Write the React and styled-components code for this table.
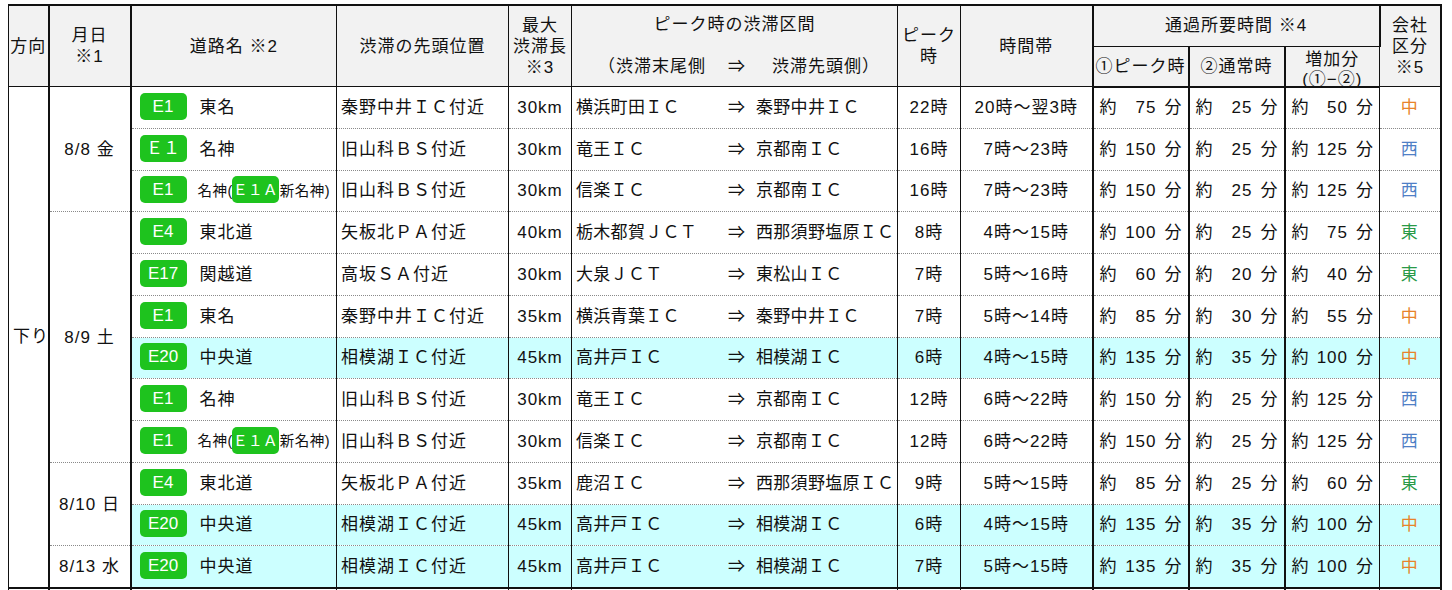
import React from 'react'
import styled, { createGlobalStyle } from 'styled-components'

const GlobalStyle = createGlobalStyle`
  body {
    margin: 0;
    padding: 4px 0 0 8px;
    background: #fff;
    color: #111;
    font-family: "Liberation Sans", "Noto Sans CJK JP", sans-serif;
  }
`

const WIDTHS = [40, 82, 206, 172, 63, 326, 63, 132, 96, 96, 95, 61]
// columns with a heavy rule on their right side
const THICK = [true, true, false, false, false, false, false, true, true, true, false, true]

const COMPANY = {
  中: '#e8832a',
  西: '#4f7fc6',
  東: '#2a9a48',
}

const ROWS = [
  { date: '8/8 金', span: 3, code: 'E1', name: '東名', head: '秦野中井ＩＣ付近', len: '30km', from: '横浜町田ＩＣ', to: '秦野中井ＩＣ', peak: '22時', band: '20時～翌3時', t: [75, 25, 50], co: '中' },
  { code: 'Ｅ１', name: '名神', head: '旧山科ＢＳ付近', len: '30km', from: '竜王ＩＣ', to: '京都南ＩＣ', peak: '16時', band: '7時～23時', t: [150, 25, 125], co: '西' },
  { code: 'E1', alt: true, head: '旧山科ＢＳ付近', len: '30km', from: '信楽ＩＣ', to: '京都南ＩＣ', peak: '16時', band: '7時～23時', t: [150, 25, 125], co: '西' },
  { date: '8/9 土', span: 6, code: 'E4', name: '東北道', head: '矢板北ＰＡ付近', len: '40km', from: '栃木都賀ＪＣＴ', to: '西那須野塩原ＩＣ', peak: '8時', band: '4時～15時', t: [100, 25, 75], co: '東' },
  { code: 'E17', name: '関越道', head: '高坂ＳＡ付近', len: '30km', from: '大泉ＪＣＴ', to: '東松山ＩＣ', peak: '7時', band: '5時～16時', t: [60, 20, 40], co: '東' },
  { code: 'E1', name: '東名', head: '秦野中井ＩＣ付近', len: '35km', from: '横浜青葉ＩＣ', to: '秦野中井ＩＣ', peak: '7時', band: '5時～14時', t: [85, 30, 55], co: '中' },
  { code: 'E20', name: '中央道', head: '相模湖ＩＣ付近', len: '45km', from: '高井戸ＩＣ', to: '相模湖ＩＣ', peak: '6時', band: '4時～15時', t: [135, 35, 100], co: '中', hl: true },
  { code: 'E1', name: '名神', head: '旧山科ＢＳ付近', len: '30km', from: '竜王ＩＣ', to: '京都南ＩＣ', peak: '12時', band: '6時～22時', t: [150, 25, 125], co: '西' },
  { code: 'E1', alt: true, head: '旧山科ＢＳ付近', len: '30km', from: '信楽ＩＣ', to: '京都南ＩＣ', peak: '12時', band: '6時～22時', t: [150, 25, 125], co: '西' },
  { date: '8/10 日', span: 2, code: 'E4', name: '東北道', head: '矢板北ＰＡ付近', len: '35km', from: '鹿沼ＩＣ', to: '西那須野塩原ＩＣ', peak: '9時', band: '5時～15時', t: [85, 25, 60], co: '東' },
  { code: 'E20', name: '中央道', head: '相模湖ＩＣ付近', len: '45km', from: '高井戸ＩＣ', to: '相模湖ＩＣ', peak: '6時', band: '4時～15時', t: [135, 35, 100], co: '中', hl: true },
  { date: '8/13 水', span: 1, code: 'E20', name: '中央道', head: '相模湖ＩＣ付近', len: '45km', from: '高井戸ＩＣ', to: '相模湖ＩＣ', peak: '7時', band: '5時～15時', t: [135, 35, 100], co: '中', hl: true },
]

// header text, one block per line so mixed fonts can't grow the rows
const Lines = ({ items }) => items.map((t, i) => <Line key={i}>{t}</Line>)

function App() {
  return (
    <>
      <GlobalStyle />
      <Table>
        <colgroup>
          {WIDTHS.map((w, i) => (
            <col key={i} style={{ width: w }} />
          ))}
        </colgroup>
        <thead>
          <HeadRow $h={41}>
            <Th rowSpan={2} $thick>
              <Lines items={['方向']} />
            </Th>
            <Th rowSpan={2} $thick>
              <Lines items={['月日', '※1']} />
            </Th>
            <Th rowSpan={2}>
              <Lines items={['道路名 ※2']} />
            </Th>
            <Th rowSpan={2}>
              <Lines items={['渋滞の先頭位置']} />
            </Th>
            <Th rowSpan={2}>
              <Lines items={['最大', '渋滞長', '※3']} />
            </Th>
            <Th rowSpan={2}>
              <SectionTitle>ピーク時の渋滞区間</SectionTitle>
              <SectionLegend>
                <span>（渋滞末尾側</span>
                <span>⇒</span>
                <span>渋滞先頭側）</span>
              </SectionLegend>
            </Th>
            <Th rowSpan={2}>
              <Lines items={['ピーク', '時']} />
            </Th>
            <Th rowSpan={2} $thick>
              <Lines items={['時間帯']} />
            </Th>
            <Th colSpan={3} $thick>
              <Lines items={['通過所要時間 ※4']} />
            </Th>
            <Th rowSpan={2} $thick>
              <Lines items={['会社', '区分', '※5']} />
            </Th>
          </HeadRow>
          <HeadRow $h={40}>
            <Th $thick>
              <Lines items={['①ピーク時']} />
            </Th>
            <Th $thick>
              <Lines items={['②通常時']} />
            </Th>
            <Th>
              <Overhang>
                <Lines items={['増加分', '(①−②)']} />
              </Overhang>
            </Th>
          </HeadRow>
        </thead>
        <tbody>
          {ROWS.map((r, i) => (
            <Row key={i} $hl={r.hl}>
              {i === 0 && (
                <Td rowSpan={ROWS.length} $thick $align="center" $plain>
                  下り
                </Td>
              )}
              {r.date && (
                <Td rowSpan={r.span} $thick $align="center" $plain>
                  {r.date}
                </Td>
              )}
              <Td $pad="0 0 0 8px">
                <Road>
                  <Badge>{r.code}</Badge>
                  {r.alt ? (
                    <AltName>
                      名神(<Badge $inline>Ｅ１Ａ</Badge>新名神)
                    </AltName>
                  ) : (
                    <RoadName>{r.name}</RoadName>
                  )}
                </Road>
              </Td>
              <Td>{r.head}</Td>
              <Td $align="center">{r.len}</Td>
              <Td>
                <Section>
                  <span>{r.from}</span>
                  <span>⇒</span>
                  <span>{r.to}</span>
                </Section>
              </Td>
              <Td $align="center">{r.peak}</Td>
              <Td $align="center" $thick>
                {r.band}
              </Td>
              {r.t.map((n, k) => (
                <Td key={k} $thick={k < 2} $pad="0 5px 0 6px">
                  <Dur>
                    <span>約</span>
                    <span>
                      {n}
                      <Unit>分</Unit>
                    </span>
                  </Dur>
                </Td>
              ))}
              <Td $align="center" $thick $color={COMPANY[r.co]}>
                {r.co}
              </Td>
            </Row>
          ))}
          <Row>
            {WIDTHS.map((w, i) => (
              <Td key={i} $thick={THICK[i]} $top />
            ))}
          </Row>
        </tbody>
      </Table>
    </>
  )
}

const Table = styled.table`
  width: 1432px;
  table-layout: fixed;
  border-collapse: collapse;
  font-size: 17px;
  letter-spacing: 1px;
  border-top: 2px solid #111;
  border-left: 1px solid #111;
`

const HeadRow = styled.tr`
  height: ${p => p.$h}px;
`

const Th = styled.th`
  background: #f2f2f2;
  font-weight: normal;
  text-align: center;
  vertical-align: middle;
  padding: 0;
  border: 1px solid #111;
  border-right: ${p => (p.$thick ? 2 : 1)}px solid #111;
  white-space: nowrap;

  tr:last-child > & {
    border-bottom: 2px solid #111;
  }
`

const Line = styled.div`
  height: 21px;
  line-height: 21px;
`

const Overhang = styled.div`
  height: 36px;
  padding-top: 3px;

  & > div {
    height: 20px;
    line-height: 20px;
  }
`

const SectionTitle = styled.div`
  height: 22px;
  line-height: 22px;
  margin-bottom: 20px;
`

const SectionLegend = styled.div`
  display: flex;
  height: 22px;
  line-height: 22px;
  padding-left: 26px;

  span:nth-child(2) {
    margin: 0 26px 0 22px;
  }
`

const Row = styled.tr`
  height: 41.75px;
  background: ${p => (p.$hl ? '#ccffff' : '#fff')};
`

const Td = styled.td`
  padding: ${p => p.$pad || '0 4px'};
  text-align: ${p => p.$align || 'left'};
  vertical-align: middle;
  line-height: 1;
  white-space: nowrap;
  overflow: hidden;
  color: ${p => p.$color || '#111'};
  border-left: 1px solid #111;
  border-right: ${p => (p.$thick ? 2 : 1)}px solid #111;
  border-top: ${p => (p.$top ? '2px solid #111' : '1px dotted #8a8a8a')};
  border-bottom: 1px dotted #8a8a8a;
  ${p => p.$plain && 'background: #fff;'}
`

const Road = styled.div`
  display: flex;
  align-items: center;
`

const Badge = styled.span`
  display: inline-flex;
  align-items: center;
  justify-content: center;
  flex: none;
  width: 47px;
  height: 27px;
  border-radius: 5px;
  background: #1ec31e;
  color: #fff;
  font-size: ${p => (p.$inline ? 15 : 17)}px;
  letter-spacing: 0;
  margin-top: -2px;
  ${p => p.$inline && 'margin: -2px 1px 0 -1px;'}
`

const RoadName = styled.span`
  margin-left: 13px;
`

const AltName = styled.span`
  display: flex;
  align-items: center;
  margin-left: 11px;
  font-size: 14.5px;
  letter-spacing: 0.5px;
`

const Section = styled.div`
  display: grid;
  grid-template-columns: 152px 28px 1fr;
  align-items: center;
  letter-spacing: 0.3px;
`

const Dur = styled.div`
  display: flex;
  justify-content: space-between;
`

const Unit = styled.span`
  margin-left: 8px;
`

export default App
